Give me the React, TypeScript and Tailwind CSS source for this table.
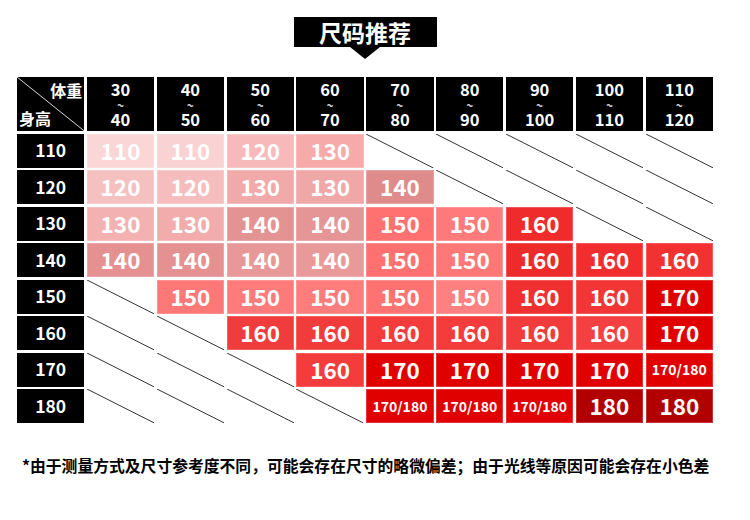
import React from "react"

const weights = [
    ["30", "40"],
    ["40", "50"],
    ["50", "60"],
    ["60", "70"],
    ["70", "80"],
    ["80", "90"],
    ["90", "100"],
    ["100", "110"],
    ["110", "120"],
]

type Cell = { v: string; bg: string } | null

const c = (v: string | number, bg: string): Cell => ({ v: String(v), bg })

// height rows, one cell per weight column
const rows: { h: string; cells: Cell[] }[] = [
    { h: "110", cells: [c(110, "#fad6d6"), c(110, "#f9d3d3"), c(120, "#f7b9b9"), c(130, "#f6aaaa"), null, null, null, null, null] },
    { h: "120", cells: [c(120, "#f5c0c0"), c(120, "#f5bdbd"), c(130, "#f2a9a9"), c(130, "#f0a7a7"), c(140, "#df8b8b"), null, null, null, null] },
    { h: "130", cells: [c(130, "#f3b1b1"), c(130, "#f3acac"), c(140, "#e49393"), c(140, "#e59595"), c(150, "#ff7070"), c(150, "#ff7a7a"), c(160, "#ef2b2b"), null, null] },
    { h: "140", cells: [c(140, "#e69191"), c(140, "#e69191"), c(140, "#e89898"), c(140, "#e99999"), c(150, "#ff7171"), c(150, "#ff7878"), c(160, "#ee2b2b"), c(160, "#f12d2d"), c(160, "#f23131")] },
    { h: "150", cells: [null, c(150, "#ff7878"), c(150, "#ff7b7b"), c(150, "#ff7c7c"), c(150, "#ff7272"), c(150, "#ff8080"), c(160, "#f03030"), c(160, "#f23535"), c(170, "#e00000")] },
    { h: "160", cells: [null, null, c(160, "#f03c3c"), c(160, "#f23b3b"), c(160, "#f43c3c"), c(160, "#f43c3c"), c(160, "#f23c3c"), c(160, "#f44040"), c(170, "#e00000")] },
    { h: "170", cells: [null, null, null, c(160, "#f43c3c"), c(170, "#e00000"), c(170, "#e00000"), c(170, "#e00000"), c(170, "#e00000"), c("170/180", "#e00000")] },
    { h: "180", cells: [null, null, null, null, c("170/180", "#e00000"), c("170/180", "#e00000"), c("170/180", "#e00000"), c(180, "#b20000"), c(180, "#b20000")] },
]

const Slash = ({ color }: { color: string }) => (
    <svg className="absolute inset-0 w-full h-full" viewBox="0 0 100 100" preserveAspectRatio="none">
        <line x1="0" y1="0" x2="100" y2="100" stroke={color} strokeWidth="1" vectorEffect="non-scaling-stroke" />
    </svg>
)

export default function App() {
    return (
        <div className="w-[750px] h-[520px] bg-white pt-[17px] pl-[17px] font-['Noto_Sans_CJK_SC',sans-serif] font-bold">
            <div className="w-[696px]">
                {/* title */}
                <div className="flex justify-center">
                    <div className="relative w-[143px] h-[30px] bg-black flex items-center justify-center text-white text-[23px] leading-none">
                        尺码推荐
                        <div className="absolute left-1/2 -translate-x-1/2 top-full w-0 h-0 border-l-[15px] border-r-[15px] border-t-[12px] border-l-transparent border-r-transparent border-t-black" />
                    </div>
                </div>

                {/* table */}
                <div className="mt-[30px] grid grid-cols-10 grid-rows-[54px_repeat(8,34px)] gap-[2.5px] text-white">
                    <div className="relative bg-black flex flex-col justify-between px-[2px] py-[2px] text-[16px] leading-[22px]">
                        <Slash color="#d8d8d8" />
                        <span className="self-end">体重</span>
                        <span className="self-start">身高</span>
                    </div>
                    {weights.map(([a, b]) => (
                        <div key={a} className="bg-black flex flex-col items-center justify-center text-[16.5px]">
                            <span className="h-[17px] leading-[17px]">{a}</span>
                            <span className="h-[13px] leading-[13px] text-[12px] text-gray-300">~</span>
                            <span className="h-[17px] leading-[17px]">{b}</span>
                        </div>
                    ))}
                    {rows.map((row) => (
                        <React.Fragment key={row.h}>
                            <div className="bg-black flex items-center justify-center text-[17.5px]">{row.h}</div>
                            {row.cells.map((cell, i) =>
                                cell ? (
                                    <div
                                        key={i}
                                        style={{ backgroundColor: cell.bg }}
                                        className={`flex items-center justify-center border border-white/20 ${cell.v.includes("/") ? "text-[14px]" : "text-[22.5px]"}`}
                                    >
                                        {cell.v}
                                    </div>
                                ) : (
                                    <div key={i} className="relative bg-white">
                                        <Slash color="#333333" />
                                    </div>
                                )
                            )}
                        </React.Fragment>
                    ))}
                </div>
            </div>

            <p className="mt-[33px] pl-[5px] text-[15.8px] leading-[20px] text-black">
                *由于测量方式及尺寸参考度不同，可能会存在尺寸的略微偏差；由于光线等原因可能会存在小色差
            </p>
        </div>
    )
}
